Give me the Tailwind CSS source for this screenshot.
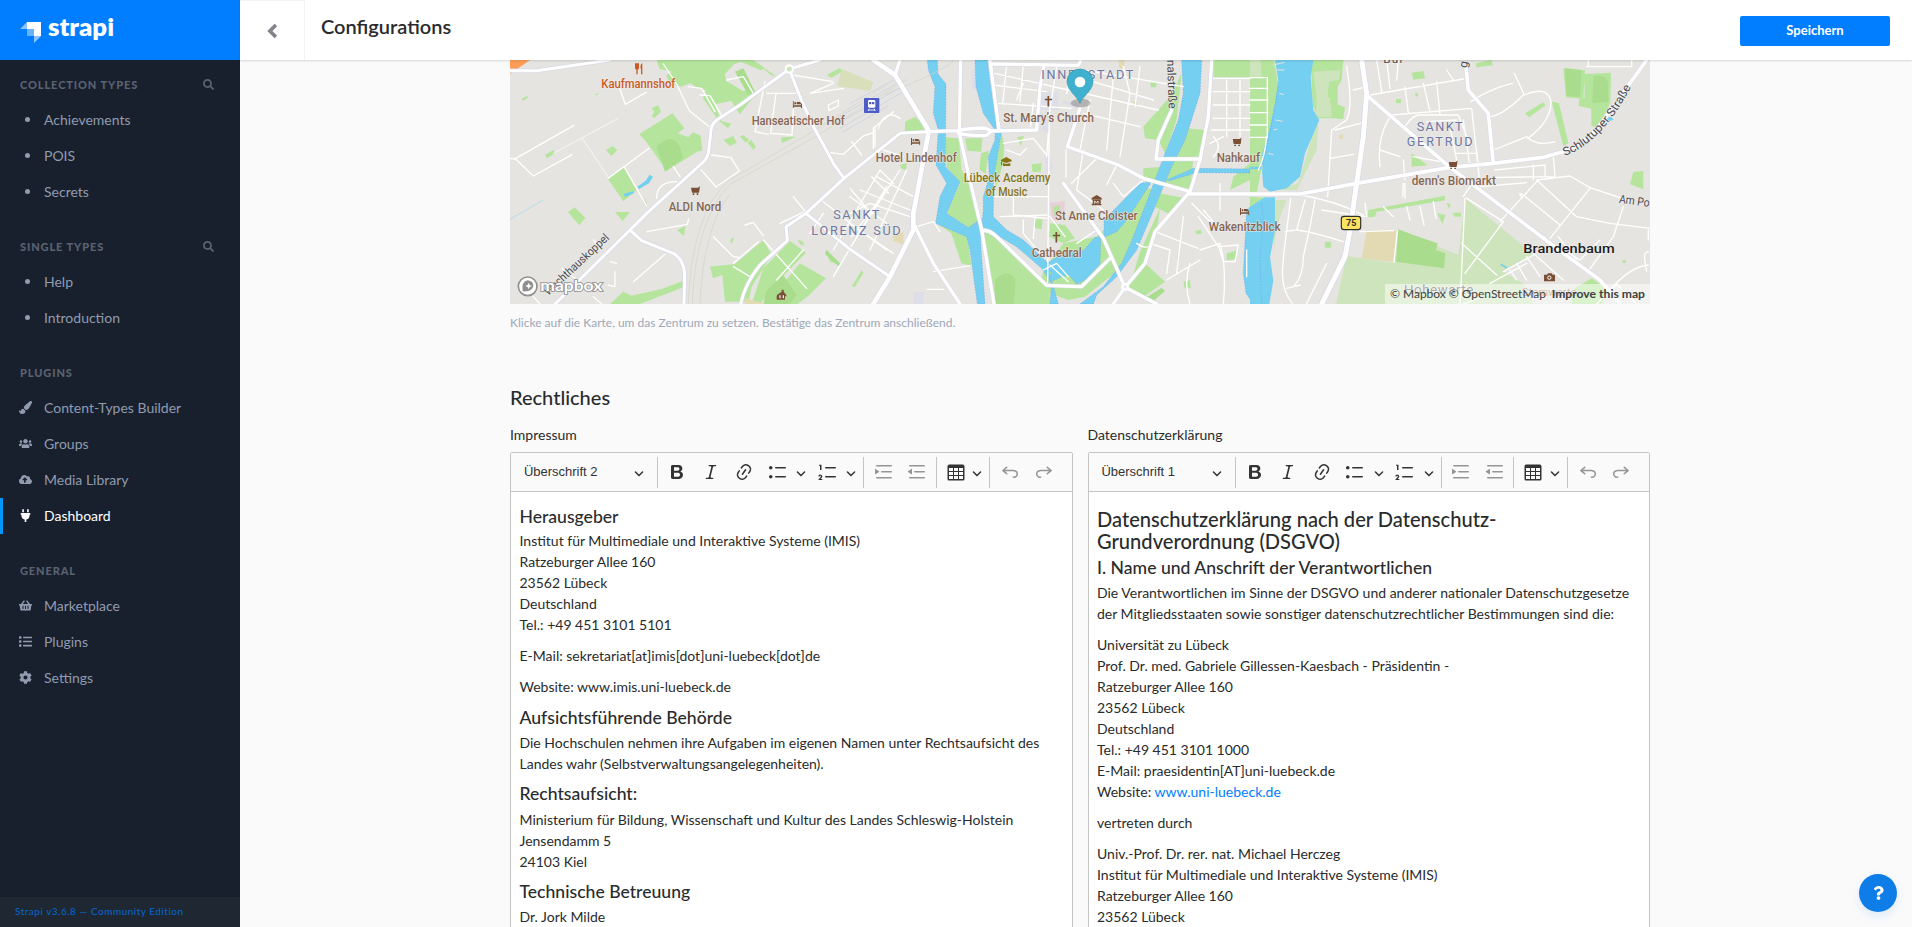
<!DOCTYPE html>
<html lang="de">
<head>
<meta charset="utf-8">
<title>Configurations</title>
<script src="https://cdn.jsdelivr.net/npm/@tailwindcss/browser@4"></script>
</head>
<body class="h-[927px] overflow-hidden bg-[#fafafb] font-[Lato,sans-serif] text-[14px] text-[#292b2c]">

<!-- Icon sprite -->
<svg class="hidden">
  <symbol id="search" viewBox="0 0 512 512"><path d="M505 442.7L405.3 343c-4.5-4.5-10.6-7-17-7H372c27.6-35.3 44-79.7 44-128C416 93.1 322.9 0 208 0S0 93.1 0 208s93.1 208 208 208c48.3 0 92.7-16.4 128-44v16.3c0 6.4 2.5 12.5 7 17l99.7 99.7c9.4 9.4 24.6 9.4 33.9 0l28.3-28.3c9.4-9.4 9.4-24.6.1-34zM208 336c-70.7 0-128-57.2-128-128 0-70.7 57.2-128 128-128 70.7 0 128 57.2 128 128 0 70.7-57.2 128-128 128z"/></symbol>
  <symbol id="brush" viewBox="0 0 512 512"><path d="M167.02 309.34c-40.12 2.58-76.53 17.86-97.19 72.3-2.35 6.21-8 9.98-14.59 9.98-11.11 0-45.46-27.67-55.25-34.35C0 439.62 37.93 512 128 512c75.86 0 128-43.77 128-120.19 0-3.11-.65-6.08-.97-9.13l-88.01-73.34zM457.89 0c-15.16 0-29.37 6.71-40.21 16.45C213.27 199.05 192 203.34 192 257.09c0 13.7 3.25 26.76 8.73 38.7l63.82 53.18c7.21 1.8 14.64 3.03 22.39 3.03 62.11 0 98.11-45.47 211.16-256.46 7.38-14.35 13.9-29.85 13.9-45.99C512 20.64 486 0 457.89 0z"/></symbol>
  <symbol id="users" viewBox="0 0 640 512"><path d="M96 224c35.3 0 64-28.7 64-64s-28.7-64-64-64-64 28.7-64 64 28.7 64 64 64zm448 0c35.3 0 64-28.7 64-64s-28.7-64-64-64-64 28.7-64 64 28.7 64 64 64zm32 32h-64c-17.6 0-33.5 7.1-45.1 18.6 40.3 22.1 68.9 62 75.1 109.4h66c17.7 0 32-14.3 32-32v-32c0-35.3-28.7-64-64-64zm-256 0c61.9 0 112-50.1 112-112S381.9 32 320 32 208 82.1 208 144s50.1 112 112 112zm76.8 32h-8.3c-20.8 10-43.9 16-68.5 16s-47.6-6-68.5-16h-8.3C179.6 288 128 339.6 128 403.2V432c0 26.5 21.5 48 48 48h288c26.5 0 48-21.5 48-48v-28.8c0-63.6-51.6-115.2-115.2-115.2zm-223.7-13.4C161.5 263.1 145.6 256 128 256H64c-35.3 0-64 28.7-64 64v32c0 17.7 14.3 32 32 32h65.9c6.3-47.4 34.9-87.3 75.2-109.4z"/></symbol>
  <symbol id="cloud" viewBox="0 0 640 512"><path d="M537.6 226.6c4.1-10.7 6.4-22.4 6.4-34.6 0-53-43-96-96-96-19.7 0-38.1 6-53.3 16.2C367 64.2 315.3 32 256 32c-88.4 0-160 71.6-160 160 0 2.7.1 5.4.2 8.1C40.2 219.8 0 273.2 0 336c0 79.5 64.5 144 144 144h368c70.7 0 128-57.3 128-128 0-61.9-44-113.6-102.4-125.4zM393.4 288H328v112c0 8.8-7.2 16-16 16h-48c-8.8 0-16-7.2-16-16V288h-65.4c-14.3 0-21.4-17.2-11.3-27.3l105.4-105.4c6.2-6.2 16.4-6.2 22.6 0l105.4 105.4c10.1 10.1 2.9 27.3-11.3 27.3z"/></symbol>
  <symbol id="plug" viewBox="0 0 384 512"><path d="M320 32a32 32 0 0 0-64 0v96h64zm48 128H16a16 16 0 0 0-16 16v32a16 16 0 0 0 16 16h16v32a160.07 160.07 0 0 0 128 156.8V512h64v-99.2A160.07 160.07 0 0 0 352 256v-32h16a16 16 0 0 0 16-16v-32a16 16 0 0 0-16-16zM128 32a32 32 0 0 0-64 0v96h64z"/></symbol>
  <symbol id="basket" viewBox="0 0 576 512"><path d="M576 216v16c0 13.255-10.745 24-24 24h-8l-26.113 182.788C514.509 462.435 494.257 480 470.37 480H105.63c-23.887 0-44.139-17.565-47.518-41.212L32 256h-8c-13.255 0-24-10.745-24-24v-16c0-13.255 10.745-24 24-24h67.341l106.78-146.821c10.395-14.292 30.407-17.453 44.701-7.058 14.293 10.395 17.453 30.408 7.058 44.701L170.477 192h235.046L326.12 82.821c-10.395-14.292-7.234-34.306 7.059-44.701 14.291-10.395 34.306-7.235 44.701 7.058L484.659 192H552c13.255 0 24 10.745 24 24zM312 392V280c0-13.255-10.745-24-24-24s-24 10.745-24 24v112c0 13.255 10.745 24 24 24s24-10.745 24-24zm112 0V280c0-13.255-10.745-24-24-24s-24 10.745-24 24v112c0 13.255 10.745 24 24 24s24-10.745 24-24zm-224 0V280c0-13.255-10.745-24-24-24s-24 10.745-24 24v112c0 13.255 10.745 24 24 24s24-10.745 24-24z"/></symbol>
  <symbol id="list" viewBox="0 0 512 512"><rect y="48" width="96" height="96" rx="16"/><rect y="208" width="96" height="96" rx="16"/><rect y="368" width="96" height="96" rx="16"/><rect x="160" y="64" width="352" height="64" rx="16"/><rect x="160" y="224" width="352" height="64" rx="16"/><rect x="160" y="384" width="352" height="64" rx="16"/></symbol>
  <symbol id="cog" viewBox="0 0 512 512"><path d="M487.4 315.7l-42.6-24.6c4.3-23.2 4.3-47 0-70.2l42.6-24.6c4.9-2.8 7.1-8.6 5.5-14-11.1-35.6-30-67.8-54.7-94.6-3.8-4.1-10-5.1-14.8-2.3L380.8 110c-17.9-15.4-38.5-27.3-60.8-35.1V25.8c0-5.6-3.9-10.5-9.4-11.7-36.7-8.2-74.3-7.8-109.2 0-5.5 1.2-9.4 6.1-9.4 11.7V75c-22.2 7.9-42.8 19.8-60.8 35.1L88.7 85.5c-4.9-2.8-11-1.9-14.8 2.3-24.7 26.7-43.6 58.9-54.7 94.6-1.7 5.4.6 11.2 5.5 14L67.3 221c-4.3 23.2-4.3 47 0 70.2l-42.6 24.6c-4.9 2.8-7.1 8.6-5.5 14 11.1 35.6 30 67.8 54.7 94.6 3.8 4.1 10 5.1 14.8 2.3l42.6-24.6c17.9 15.4 38.5 27.3 60.8 35.1v49.2c0 5.6 3.9 10.5 9.4 11.7 36.7 8.2 74.3 7.8 109.2 0 5.5-1.2 9.4-6.1 9.4-11.7v-49.2c22.2-7.9 42.8-19.8 60.8-35.1l42.6 24.6c4.9 2.8 11 1.9 14.8-2.3 24.7-26.7 43.6-58.9 54.7-94.6 1.5-5.5-.7-11.3-5.6-14.1zM256 336c-44.1 0-80-35.9-80-80s35.9-80 80-80 80 35.9 80 80-35.9 80-80 80z"/></symbol>
  <symbol id="back" viewBox="0 0 11 16"><path d="M8.900 2L2.900 8l6 6" fill="none" stroke="#81848b" stroke-width="3.700"/></symbol>
  <symbol id="question" viewBox="0 0 384 512"><path d="M202.021 0C122.202 0 70.503 32.703 29.914 91.026c-7.363 10.58-5.093 25.086 5.178 32.874l43.138 32.709c10.373 7.865 25.132 6.026 33.253-4.148 25.049-31.381 43.63-49.449 82.757-49.449 30.764 0 68.816 19.799 68.816 49.631 0 22.552-18.617 34.134-48.993 51.164-35.423 19.86-82.299 44.576-82.299 106.405V320c0 13.255 10.745 24 24 24h72.471c13.255 0 24-10.745 24-24v-5.773c0-42.86 125.268-44.645 125.268-160.627C377.504 66.256 286.902 0 202.021 0zM192 373.459c-38.196 0-69.271 31.075-69.271 69.271 0 38.195 31.075 69.27 69.271 69.27s69.271-31.075 69.271-69.271-31.075-69.27-69.271-69.27z"/></symbol>
  <symbol id="bold" viewBox="0 0 20 20"><path d="M10.187 17H5.773c-.637 0-1.092-.138-1.364-.415-.273-.277-.409-.718-.409-1.323V4.738c0-.617.14-1.062.419-1.332.279-.27.73-.406 1.354-.406h4.68c.69 0 1.288.041 1.793.124.506.083.96.242 1.36.478.341.197.644.447.906.75a3.262 3.262 0 0 1 .808 2.162c0 1.401-.722 2.426-2.167 3.075C15.05 10.175 16 11.315 16 13.01a3.756 3.756 0 0 1-2.296 3.504 6.1 6.1 0 0 1-1.517.377c-.571.073-1.238.11-2 .11zm-.217-6.217H7v4.087h3.069c1.977 0 2.965-.69 2.965-2.072 0-.707-.256-1.22-.768-1.537-.512-.319-1.277-.478-2.296-.478zM7 5.13v3.619h2.606c.729 0 1.292-.067 1.69-.2a1.6 1.6 0 0 0 .91-.765c.165-.267.247-.566.247-.897 0-.707-.26-1.176-.778-1.409-.519-.232-1.31-.348-2.375-.348H7z"/></symbol>
  <symbol id="italic" viewBox="0 0 20 20"><path d="m9.586 14.633.021.004c-.036.335.095.655.393.962.082.083.173.15.274.201h1.474a.6.6 0 1 1 0 1.2H5.304a.6.6 0 0 1 0-1.2h1.15c.474-.07.809-.182 1.005-.334.157-.122.291-.32.404-.597l2.416-9.55a1.053 1.053 0 0 0-.281-.823 1.12 1.12 0 0 0-.442-.296H8.15a.6.6 0 0 1 0-1.2h6.443a.6.6 0 1 1 0 1.2h-1.195c-.376.056-.65.155-.823.296-.215.175-.423.439-.623.79l-2.366 9.347z"/></symbol>
  <symbol id="link" viewBox="0 0 20 20"><path d="m11.077 15 .991-1.416a.75.75 0 1 1 1.229.86l-1.148 1.64a.748.748 0 0 1-.217.206 5.251 5.251 0 0 1-8.503-5.955.741.741 0 0 1 .12-.274l1.147-1.639a.75.75 0 1 1 1.228.86L4.933 10.7l.006.003a3.75 3.75 0 0 0 6.132 4.294l.006.004zm5.494-5.335a.748.748 0 0 1-.12.274l-1.147 1.639a.75.75 0 1 1-1.228-.86l.86-1.23a3.75 3.75 0 0 0-6.144-4.301l-.86 1.229a.75.75 0 0 1-1.229-.86l1.148-1.64a.748.748 0 0 1 .217-.206 5.251 5.251 0 0 1 8.503 5.955zm-4.563-2.532a.75.75 0 0 1 .184 1.045l-3.155 4.505a.75.75 0 1 1-1.229-.86l3.155-4.506a.75.75 0 0 1 1.045-.184z"/></symbol>
  <symbol id="bullets" viewBox="0 0 20 20"><path d="M7 5.75c0 .414.336.75.75.75h9.5a.75.75 0 1 0 0-1.5h-9.5a.75.75 0 0 0-.75.75zm-6 0C1 4.784 1.777 4 2.75 4c.966 0 1.75.777 1.75 1.75 0 .966-.777 1.75-1.75 1.75C1.784 7.5 1 6.723 1 5.75zm6 9c0 .414.336.75.75.75h9.5a.75.75 0 1 0 0-1.5h-9.5a.75.75 0 0 0-.75.75zm-6 0c0-.966.777-1.75 1.75-1.75.966 0 1.75.777 1.75 1.75 0 .966-.777 1.75-1.75 1.75-.966 0-1.75-.777-1.75-1.75z"/></symbol>
  <symbol id="numbers" viewBox="0 0 20 20"><path d="M7 5.75c0 .414.336.75.75.75h9.5a.75.75 0 1 0 0-1.5h-9.5a.75.75 0 0 0-.75.75zM3.5 3v5H2V3.7H1v-1h2.5V3zM.343 17.857l2.59-3.257H2.92a.6.6 0 1 0-1.04 0H.302a2 2 0 1 1 3.995 0h-.001c-.048.405-.16.734-.333.988-.175.254-.59.692-1.244 1.312H4.3v1h-4l.043-.043zM7 14.75a.75.75 0 0 1 .75-.75h9.5a.75.75 0 1 1 0 1.5h-9.5a.75.75 0 0 1-.75-.75z"/></symbol>
  <symbol id="indent" viewBox="0 0 20 20"><path d="M2 3.75c0 .414.336.75.75.75h14.5a.75.75 0 1 0 0-1.5H2.75a.75.75 0 0 0-.75.75zm5 6c0 .414.336.75.75.75h9.5a.75.75 0 1 0 0-1.5h-9.5a.75.75 0 0 0-.75.75zM2.75 16.5h14.5a.75.75 0 1 0 0-1.5H2.75a.75.75 0 1 0 0 1.5zM1.632 6.95 5.02 9.358a.4.4 0 0 1-.013.661l-3.39 2.207A.4.4 0 0 1 1 11.892V7.275a.4.4 0 0 1 .632-.326z"/></symbol>
  <symbol id="outdent" viewBox="0 0 20 20"><path d="M2 3.75c0 .414.336.75.75.75h14.5a.75.75 0 1 0 0-1.5H2.75a.75.75 0 0 0-.75.75zm5 6c0 .414.336.75.75.75h9.5a.75.75 0 1 0 0-1.5h-9.5a.75.75 0 0 0-.75.75zM2.75 16.5h14.5a.75.75 0 1 0 0-1.5H2.75a.75.75 0 1 0 0 1.5zm1.618-9.55L.98 9.358a.4.4 0 0 0 .013.661l3.39 2.207A.4.4 0 0 0 5 11.892V7.275a.4.4 0 0 0-.632-.326z"/></symbol>
  <symbol id="table" viewBox="0 0 20 20"><path d="M3 6v3h4V6H3zm0 4v3h4v-3H3zm0 4v3h4v-3H3zm5 3h4v-3H8v3zm5 0h4v-3h-4v3zm4-4v-3h-4v3h4zm0-4V6h-4v3h4zm1.5 8a1.5 1.5 0 0 1-1.5 1.5H3A1.5 1.5 0 0 1 1.5 17V4c.222-.863 1.068-1.5 2-1.5h13c.932 0 1.778.637 2 1.5v13zM12 13v-3H8v3h4zm0-4V6H8v3h4z"/></symbol>
  <symbol id="undo" viewBox="0 0 20 20"><path d="m5.042 9.367 2.189 1.837a.75.75 0 0 1-.965 1.149l-3.788-3.18a.747.747 0 0 1-.21-.284.75.75 0 0 1 .17-.945L6.23 4.762a.75.75 0 1 1 .964 1.15L4.863 7.866h8.917A.75.75 0 0 1 14 7.9a4 4 0 1 1-1.477 7.718l.344-1.489a2.5 2.5 0 1 0 1.094-4.73l.008-.032H5.042z"/></symbol>
  <symbol id="chev" viewBox="0 0 10 10"><path d="M.941 4.523a.75.75 0 1 1 1.06-1.06l3.006 3.005 3.005-3.005a.75.75 0 1 1 1.06 1.06l-3.549 3.55a.75.75 0 0 1-1.168-.136L.941 4.523z"/></symbol>
  <symbol id="bed" viewBox="0 0 28 22"><path d="M0 0h3v13h22V8h3v14h-3v-5H3v5H0zM5 4h5v6H5zM12 3h9l4 3v4H12z" fill="#7a4f35"/></symbol>
  <symbol id="cart" viewBox="0 0 28 26"><path d="M26 0h2l-3 19H4L1 4h22zM6 21h5v5H6zm12 0h5v5h-5z" fill="#7a4f35"/></symbol>
  <symbol id="cross" viewBox="0 0 22 32"><path d="M8.500 0h5v8H22v5h-8.500v19h-5V13H0V8h8.500z" fill="#7a4f35"/></symbol>
</svg>

<div class="flex h-full">
  <!-- Sidebar -->
  <aside class="flex w-[240px] shrink-0 flex-col bg-[#18202e] text-[#919bae]">
    <div class="flex h-[60px] items-start bg-[#007eff] pt-[7px] pl-5">
      <svg class="h-[48px] w-[100px]" viewBox="0 -10 100 48">
        <path d="M7 5h14v14h-7v-7H7z" fill="#fff"/>
        <path d="M7 5v7H0zM14 19h7l-7 7z" fill="#8dc4ff"/>
        <path d="M7 12h7v7H7z" fill="#66b2ff"/>
        <text x="28" y="19" font-family="Lato" font-weight="800" font-size="25" fill="#fff" textLength="66" lengthAdjust="spacingAndGlyphs">strapi</text>
      </svg>
    </div>
    <nav class="flex flex-col pt-[7px]">
      <div class="flex h-[35px] items-center justify-between pt-[2px] pr-[26px] pl-5 text-[11px] font-black tracking-[.9px] text-[#5b6270]">COLLECTION TYPES<svg class="size-[11px] -translate-y-px fill-current"><use href="#search"/></svg></div>
      <div class="mb-[19px]">
        <div class="flex h-9 items-center pb-[2px] pl-[25px]"><i class="mr-[14px] size-[5px] rounded-full bg-current"></i>Achievements</div>
        <div class="flex h-9 items-center pb-[2px] pl-[25px]"><i class="mr-[14px] size-[5px] rounded-full bg-current"></i>POIS</div>
        <div class="flex h-9 items-center pb-[2px] pl-[25px]"><i class="mr-[14px] size-[5px] rounded-full bg-current"></i>Secrets</div>
      </div>
      <div class="flex h-[35px] items-center justify-between pt-[2px] pr-[26px] pl-5 text-[11px] font-black tracking-[.9px] text-[#5b6270]">SINGLE TYPES<svg class="size-[11px] -translate-y-px fill-current"><use href="#search"/></svg></div>
      <div class="mb-[19px]">
        <div class="flex h-9 items-center pb-[2px] pl-[25px]"><i class="mr-[14px] size-[5px] rounded-full bg-current"></i>Help</div>
        <div class="flex h-9 items-center pb-[2px] pl-[25px]"><i class="mr-[14px] size-[5px] rounded-full bg-current"></i>Introduction</div>
      </div>
      <div class="flex h-[35px] items-center pt-[2px] pl-5 text-[11px] font-black tracking-[.9px] text-[#5b6270]">PLUGINS</div>
      <div class="mb-[19px]">
        <div class="flex h-9 items-center gap-3 pb-[2px] pl-[19px]"><svg class="size-[13px] fill-current"><use href="#brush"/></svg>Content-Types Builder</div>
        <div class="flex h-9 items-center gap-3 pb-[2px] pl-[19px]"><svg class="size-[13px] fill-current"><use href="#users"/></svg>Groups</div>
        <div class="flex h-9 items-center gap-3 pb-[2px] pl-[19px]"><svg class="size-[13px] fill-current"><use href="#cloud"/></svg>Media Library</div>
        <div class="flex h-9 items-center gap-3 border-l-[3px] border-[#0097f7] pb-[2px] pl-4 text-white"><svg class="size-[13px] fill-current"><use href="#plug"/></svg>Dashboard</div>
      </div>
      <div class="flex h-[35px] items-center pt-[2px] pl-5 text-[11px] font-black tracking-[.9px] text-[#5b6270]">GENERAL</div>
      <div>
        <div class="flex h-9 items-center gap-3 pb-[2px] pl-[19px]"><svg class="size-[13px] fill-current"><use href="#basket"/></svg>Marketplace</div>
        <div class="flex h-9 items-center gap-3 pb-[2px] pl-[19px]"><svg class="size-[13px] fill-current"><use href="#list"/></svg>Plugins</div>
        <div class="flex h-9 items-center gap-3 pb-[2px] pl-[19px]"><svg class="size-[13px] fill-current"><use href="#cog"/></svg>Settings</div>
      </div>
    </nav>
    <div class="mt-auto flex h-[30px] items-center bg-[#1f2733] pb-[2px] pl-[15px] text-[10px] tracking-[.5px] text-[#0468d2]">Strapi v3.6.8 — Community Edition</div>
  </aside>

  <div class="flex min-w-0 flex-1 flex-col">
    <header class="z-10 flex h-[60px] shrink-0 bg-white shadow-[0_1px_2px_0_rgba(40,42,49,.16)]">
      <div class="flex w-[65px] items-center justify-center border-t border-r border-[#f3f3f4] pt-[1px]"><svg class="h-[16px] w-[11px]"><use href="#back"/></svg></div>
      <h1 class="pt-[11px] pl-4 text-[20px] leading-[30px] font-semibold">Configurations</h1>
      <button class="mt-4 mr-[22px] ml-auto h-[30px] w-[150px] rounded-[2px] bg-[#007eff] text-[13px] font-bold text-white">Speichern</button>
    </header>

    <main class="flex min-h-0 flex-1 flex-col pl-[270px]">
      <!-- Map of Lübeck -->
      <svg class="h-[244px] w-[1140px] shrink-0" viewBox="30 30 3420 732" font-family="Roboto" font-weight="500">
        <rect x="30" y="30" width="3420" height="732" fill="#e5e4e0"/>
        <!-- parks and fields -->
        <g fill="#b5e59c">
          <path d="M470 30h290l70 50-18-5-20-18-10 4-60-26-20 8-28 30 5 20 50 30 15-5 20 20-45 55-25-40-50 10 20 50 30 8-10 14-30-25-45-65 8-25-25-5-20-15-30 10-35-15-8-20 18-10-38-8z"/>
          <path d="M418 252l100-62 35 45-20 15 70 25-3 25-100 62-60-85zM545 280l35-33 22 10 5 45-60 10z"/>
          <path d="M455 175l20-10 8 20-20 20-8-8 8-10zM64 148l16-10 5 4-16 10zM282 134l18-6-10 8zM135 315l25-15 5 10-25 15zM318 300l20-12 14 12-18 18zM322 385l52-34 36 70-40 33zM204 486l20-14 32 32-18 22zM345 486h45l-22 27zM531 540l25-12-4 30zM670 270l30-12 10 20-20 10zM720 260l10-5 18 15-10 8zM743 278l10-8 15 20-8 10zM843 262l45-2-42 20zM980 75l40-22 5 12-30 18z"/>
          <path d="M630 650l75-8 85-72 25 45-60 95-10 45h-70l-8-80-28 10zM790 655l80-82 48 35-78 80-60 74h-25zM850 700l50-60 78 45-50 50-35 27h-80zM975 600l45 45-30-10zM1055 710l30-50 5 10-25 40zM330 762l40-37 25 12 90-20 65-25v20l-130 50zM893 570l12 2 10 15-15-5zM690 570l12-10-6 22zM432 440l10 25-5 2z"/>
        </g>
        <g fill="#a9dd8d"><path d="M470 290q60-60 80 35l-55 40zM705 65l25-10 35 70-20 10zM800 720l50-45 40 60-20 27h-80zM980 600l40 40-5 8-40-36z"/></g>
        <path d="M1025 57l95 40-10 25-98-14z" fill="#d8dfba"/>
        <path d="M735 743l60 19h-60zM1175 570l35 15v-30z" fill="#e3dab4"/>
        <path d="M30 30h60L30 72z" fill="#ff9c57"/>
        <path d="M412 410l25-18 12-18 10 6-12 20-30 17zM370 432l28-8 5 5-28 12z" fill="#75cff0"/><path d="M30 508l100-58" stroke="#9fd6f0" stroke-width="2"/>
        <g transform="translate(1050 0)">
          <g fill="#b5e59c">
            <path d="M165 215l30-15 35 32 2 13h-67zM286 262l40 3 9 95 20 40 30 120-28 15-67-45 40-90-40-50zM345 265h52l-3 40-42-3zM388 358l5-48 24-8-10 70zM455 250l7 30-2 60-24 80 2-90zM257 518l95 40 12 90-30-8-30-90z"/>
            <path d="M395 540l45 18 150 140 15 64H440zM545 343l30-4-3 28-25-2zM555 508h22l-2 30-20-4zM600 520l45 5 30 40-35 15-42-20zM502 262l20-4-10 30zM150 345l20-6-2 22-15-6z"/>
            <path d="M880 230l80-90 35-70-15 140-35 100-20-40-40-5zM1010 235l52 5-12 80-90 5 40-80zM880 355l57-5-12 45-45-12zM930 430l75 15-45 48-45-22zM640 580l100-20 60-60 80-90 35 10-60 170-50 70-100 80-50 10-85-30 10-60zM885 640l60 55-70 50-45-30zM870 605l60-130-10 70-35 95-40 50z"/>
            <path d="M955 330h75l-10 90-85-25zM1090 30h110v52H1090zM1035 543l18-4 2 12-15 2zM1130 610l28-8v24l-28 5zM1000 695l20-5 2 25h-18zM900 100l20-4-2 16h-15zM1150 380l50-40v50l-60 30z"/>
          </g>
          <path d="M435 690q40-40 62 0l-5 72h-57zM885 745l50-32 10 10-35 30z" fill="#a9dd8d"/>
          <path d="M600 458l45-5-4 55-35 5z" fill="#e6cfd6"/><path d="M610 470l20-5-2 30-15 2z" fill="#b5e59c"/>
          <path d="M575 125h50v55h-50zM585 315l15 5 10 35-22 10zM635 153l50 5-5 15-45-12zM190 728l32-2-3 36h-28zM365 60l18 2-5 60-12-5zM570 190l35 10-12 50-20-10z" fill="#dbdce8" opacity=".8"/>
          <path d="M805 30h20l-5 25h-12zM848 155l12-2-2 18-10-4zM125 560l35-15v35z" fill="#e3dab4"/>
          <g fill="#75cff0" stroke="#6aa0ec" stroke-width="1.500" stroke-dasharray="5 4">
            <path d="M232 30h30l2 42 24 30-2 248 44 45-40 95 65 43 40-28-3 75 13 182h-23l-22-162-10-40-93-40 13-80 20-40-32-55 7-105-15-50 5-80-20-50z"/>
            <path d="M375 30h37l6 50 22 155 14 15-14 80-10 70v100l40 40 50 30 70 65 15 55 20 72h-25l5-62-30-45-75-65-60-35-45-25 5-50v-40l18-60-3-60 20-50v-30l-35-50-22-80z"/>
            <path d="M588 642l52-32 60-8 35-40 17-2-2 82-45 48-25 12-25-28-22 8-38 15 10-25zM762 510l108-110 35-5-75 115-30 35-38 17z"/>
            <path d="M995 30h60l-5 100-45 140-40 80-50 120-55 130-60 80-60 55-10 27h-40l70-52 55-70 35-80 50-130 45-120 40-100 15-80zM950 390l80-35 170 2v12l-160-1-80 24z"/>
            <path d="M1190 480l12-10v280l-14-20-8-60z"/>
          </g>
        </g>
        <g transform="translate(2250 0)">
          <path d="M0 30h72l14 80-11 70-15 70-25 100-15 80H0zM182 30h98l-5 60-12 20v95h-58l-17-40zM260 162l25 10-5 35h-20zM940 55l65 6-5 85-52-4zM1003 72l80-4-2 90-35 75-22-5v-52l-38-8 2-22 16-2zM905 155l22 5 28 120-15 8zM825 190l55-33 7 9-50 36zM355 480l230-43v14L380 485l-5 15-22 2zM485 310l48 36-48 4zM485 68l35-5 5 22-35 4zM678 40l45-10 6 16-50 6zM438 148l15-2v14h-15zM495 130l8-2 2 10-8 2zM562 490l25 5-10 27zM608 488h25v12h-20zM590 460l12 2-5 15zM1150 365l30-2v55l-40-15zM0 440l60 5-60 30zM1118 630h10v9h-10zM225 575h18v18h-18z" fill="#b5e59c"/>
          <path d="M0 30h32l3 50H0zM190 65l80-5-3 30-30 5-5 55-32-3zM200 140l40 2 6 60-48-2zM70 620q5-100 40-170H75zM145 400l55-190 5 20-5 70-60 120h-60z" fill="#cde4bc"/>
          <path d="M290 618l140 20 15-98 180 75 20-170 205 167-90 53 60 35 30 62H258z" fill="#cde4bc"/>
          <path d="M445 538l60 22 58 20-5 20 28 10-4 45-144-20zM945 55l50 5-5 80-40-3zM1030 80q45-15 45 30v45l-48 5z" fill="#a9dd8d"/>
          <path d="M350 540l92 3-10 93-97-11zM267 254h12v12h-12z" fill="#e3dab4"/>
          <path d="M965 720l60-35 50 35-20 42h-90z" fill="#b5e59c"/>
          <g fill="#75cff0" stroke="#6aa0ec" stroke-width="1.500" stroke-dasharray="5 4">
            <path d="M75 30h115l-8 50 8 100 18 30-43 100-15 70-40 35-50 10-20-15-5-60H0v8h38l-3-40 25-88 15-70 10-70z" stroke="none"/>
            <path d="M0 470l45-28h30v100l-15 80 10 70-12 70H0z" stroke="none"/>
            <path d="M752 640l20 12-2 4-18-10zM1065 205l20-5 5 10-20 5z" stroke="none"/>
            <path d="M85 110L60 250 36 350M35 460l5 60-10 100 5 142" fill="none"/>
            <path d="M70 45l34-8M80 60h24M76 210l22 4M70 240l12-3M55 310l16 4M88 130l14 4" stroke="#e5e4e0" stroke-width="3" stroke-dasharray="none"/>
          </g>
        </g>
        <!-- railways -->
        <g fill="none" stroke="#d3d3c6" stroke-width="2"><path d="M565 762q10-270 120-370l250-145 220-140M577 762q10-260 115-360l260-145 270-170M600 762q10-230 90-330"/><path d="M1150 135q200-80 210-105"/></g>
        <g fill="none" stroke="#cdd0e4" stroke-width="2.500"><path d="M1010 205l190-110M1015 220l190-110M1020 235l190-110M1025 248l140-80M1050 160l150-80"/></g>
        <!-- minor streets -->
        <g fill="none" stroke="#fff" stroke-width="4" stroke-linejoin="round" stroke-linecap="round">
          <path d="M222 226L46 326l54 52 116-64M30 325l16 2M325 385l122-90M372 350l68 118M352 95l24 68 62-36M490 42l40 60 38 80 60 48M565 110l40 5 40 70M600 135l30 2 35 60M680 90l50-10 30 50M800 130h90M828 130l-16 120 64 5 4-80M795 95l-30 150 40 8M635 315l58 8 25 40-70 48-45-52M470 445q0-50 60-50M440 545l122-22 4-16M400 695l95-82M640 560l60 60 15 2M700 640l75-65M700 650l50 30M790 570l130 145M910 600l-80 90M840 520l95-45M735 525l25-8 30 40M985 165l30-15v18l-28 14zM878 75l120 20M1000 100l-70 30 100-15M990 308l40 5 60-55 30-10M1055 275l30 40M1120 295v-60l60-50" /><path d="M1050 440l110 80M970 455l100 80 110 75M1000 600l140-240 40 40M1050 415l55 65M1115 380l50 50M880 440l40 50M1055 560l120-160M1000 680l160-270M970 490l-40 60M100 740l20 22M350 640l-20-5M345 665v45l-20-5M280 740l25 22M185 655l40 30M300 595l-20-25M520 350l20 30"/>
          <path d="M355 205L160 310M247 265l80 120" stroke-width="2"/>
        </g>
        <g transform="translate(1050 0)" fill="none" stroke="#fff" stroke-width="4" stroke-linejoin="round" stroke-linecap="round">
          <path d="M435 70l220 50 270 60M430 105l160 20M445 160l220 15M470 42l-12 120M520 45l-10 110M550 160l-8 70M620 50l-22 140-5 510M660 60l-10 70M700 60l300 50M730 95l180 55M700 190l170 40M820 50l20 80-30 190M870 50l-15 120M790 80l-20 220M720 150l-30 150M595 250l-5 70M648 300v80M700 300l-20 120 80 60M745 320l-80 80M800 345l-30 60M880 390l-60 50-30-40M460 280l90-15 40 50M470 300l40 15 20-20M435 440h160M490 440v55l100 10M450 500l140-5M520 510v40l50 60M555 500l-5 65M600 500l45 60M680 580l60-40M520 100L500 150"/>
          <path d="M85 235q20-60 65-30M75 290v-60M100 300l60 20M250 665l110-18M232 718h50M200 530l50-15 20 30M0 490l60-30 120 40M30 420l150 60M20 560l130-200M60 600l110-240M0 520l110 80M80 380l110 60"/>
          <path d="M1090 85h110M1090 125h110M1090 165h110M1090 205h110M1085 240h115M1080 280l40-20M1130 90v170M1170 90v170M1090 260q30 30 0 60M1110 400v80M1025 460l60 60M915 545l130 50M900 580l60 20-10 70M1000 500l-20 170M950 690l100-60M1020 640q-20 60 0 122M1050 600l60-20M1110 580q20 70 10 182M1045 500l60 90 60-5-10 50h-35l-15-50M1190 600v80M860 580q30 20 40 5M1060 480l50 60"/>
          <path d="M600 645l55 50M580 660l40-20 35 40"/>
        </g>
        <g transform="translate(2250 0)" fill="none" stroke="#fff" stroke-width="4" stroke-linejoin="round" stroke-linecap="round">
          <path d="M0 83h52v180M0 115h54M0 150h54M0 188h54M0 225h52M0 262h50M50 260q-5 60-25 100"/>
          <path d="M290 50q20 120 0 160l-45 30-12 200M255 240l95-25M310 120l40-10M240 325l70-12M380 30l15 95M410 30l10 85M445 30l-5 60M360 135l280-48M425 195l240-20M465 110l10 80M520 100l20 85M560 95l10 100M590 60l20 30M425 195q-45 60-35 155M390 300l60 20M460 240q20-40 45-45h120l35 90M530 215l90-5M460 400l-2 40M600 230l20 100M640 210l20 140M490 320l110 20M460 330l5 60M465 400v45M680 300l10 110 140-12M665 175l25 230M620 310h60"/>
          <path d="M662 155q60-40 125-55M793 70l30 65q70-30 80 20 0 60-70 110M730 300l100-40q30 30 85 15M720 200q40-5 100-65M735 360l150-15v35M735 382l180-2-5-60M850 345v45M860 390l120 110 100 20 120 15M860 390l100-12 60 35 120 40M1020 415l-120 150M860 395l-110 120M815 440q-15-15 5-5l110 90M1120 470l-30 90-80 110M890 570l100 60 60-60M925 560l70 90M850 610l90 80M850 615l-90 50M800 640l30 50M830 620l40 60M780 660l20 30M720 700l110-60M645 445l-15 320M640 440l20-30M650 445l110 70-115 155M635 580l105 95M400 470l30 30M470 470l10 40M510 470l12 55M550 455l8 50M345 460l5 40M330 545l100-3M442 543l-10 93"/>
          <path d="M122 445l-20 160-5 60q0 60 30 95M165 450l-25 90q40 5 90 20M195 450l-15 80-20 90q0 60-30 90M105 545l30-5M215 480l130 20M110 715l40-10M150 435q100 15 190 60M230 560l50 15M170 760l60-120M1010 50h135V30M1015 30v20M1195 540v30M1195 605q-15 0-10 30l5 30"/>
          <path d="M1080 720q60-70 115-75M1040 762l60-60 60 60M640 762l80-30"/>
        </g>
        <!-- major roads: casing then fill -->
        <defs>
          <g id="mA"><path d="M30 62h80L330 30M960 30l-92 27-148 108-70 45q-18 15-18 40l-7 60q-5 20-25 35L440 490l-50 50L165 762M868 57l32 83 35 80 65 120 32 45M390 540l35 32 95 38q32 20 34 60l-2 92M918 490l132 108 120 82"/><path d="M1286 245l-86 5-168 135-114 105-60 40 4 42-82 73q-45 55-58 117"/></g>
          <g id="mB"><path d="M190 520l60 120 80 122M135 75l15-45M235 245l90-3q30-8 80-8l20 9 135-3 10-130 12-65M325 250q45 9 85 6l15-13M332 30l-4 220 27 120 40 170 37 222M420 30l27 210M428 42l257 4 8-16M395 540q25 0 45 20l150 146 105 4 85-85M640 400l120 165 65 147-35 50M825 712l95 50M825 712l60-72 30-95 105-120 30-95 25-130 10-170M690 175l-38 115 153 55 75 40 140 40M1020 432h180M965 180l-40 90-7 57h127"/></g>
          <g id="mBw"><path d="M235 250l-45 240v50l-70 140-50 82M70 30l65 45 100 165"/></g>
          <g id="mC"><path d="M355 140l245 212 340 258 110 80 60 72M648 50l7 70 60 70 15 150M0 432h150l170-32 280-48 130-12 150-18 60-17q70-25 110-80L1190 30"/></g>
          <g id="mCw"><path d="M335 30l15 100-10 130-40 280-15 80-70 142"/></g>
        </defs>
        <g fill="none" stroke="#d6d7e8" stroke-linejoin="round" stroke-linecap="round">
          <use href="#mA" stroke-width="13"/><g transform="translate(1050 0)"><use href="#mB" stroke-width="13"/><use href="#mBw" stroke-width="18"/></g><g transform="translate(2250 0)"><use href="#mC" stroke-width="14"/><use href="#mCw" stroke-width="19"/></g>
        </g>
        <g fill="none" stroke="#fff" stroke-linejoin="round" stroke-linecap="round">
          <use href="#mA" stroke-width="9"/><g transform="translate(1050 0)"><use href="#mB" stroke-width="10"/><use href="#mBw" stroke-width="14"/></g><g transform="translate(2250 0)"><use href="#mC" stroke-width="11"/><use href="#mCw" stroke-width="15"/></g>
        </g>
        <circle cx="868" cy="57" r="11" fill="#cde4bc" stroke="#fff" stroke-width="7"/>
        <circle cx="1875" cy="711" r="8" fill="#e5e4e0" stroke="#fff" stroke-width="8"/>
        <!-- labels -->
        <g font-size="36" stroke="#f0efec" stroke-width="3" paint-order="stroke" stroke-linejoin="round" fill="#856655">
          <text x="304" y="115" fill="#cb5a26" textLength="222" lengthAdjust="spacingAndGlyphs">Kaufmannshof</text>
          <text x="755" y="224" textLength="279" lengthAdjust="spacingAndGlyphs">Hanseatischer Hof</text>
          <text x="506" y="482" textLength="158" lengthAdjust="spacingAndGlyphs">ALDI Nord</text>
          <text x="1127" y="335" textLength="243" lengthAdjust="spacingAndGlyphs">Hotel Lindenhof</text>
          <text x="1510" y="216" textLength="272" lengthAdjust="spacingAndGlyphs">St. Mary’s Church</text>
          <text x="1665" y="510" textLength="248" lengthAdjust="spacingAndGlyphs">St Anne Cloister</text>
          <text x="1595" y="622" textLength="150" lengthAdjust="spacingAndGlyphs">Cathedral</text>
          <text x="2150" y="335" textLength="130" lengthAdjust="spacingAndGlyphs">Nahkauf</text>
          <text x="2126" y="544" textLength="216" lengthAdjust="spacingAndGlyphs">Wakenitzblick</text>
          <text x="2735" y="404" textLength="253" lengthAdjust="spacingAndGlyphs">denn's Biomarkt</text>
          <g fill="#857420"><text x="1391" y="395" textLength="260" lengthAdjust="spacingAndGlyphs">Lübeck Academy</text><text x="1457" y="438" textLength="125" lengthAdjust="spacingAndGlyphs">of Music</text></g>
          <g fill="#6d76a3" font-weight="400" font-size="38"><text x="1000" y="508" textLength="138">SANKT</text><text x="934" y="554" textLength="268">LORENZ SÜD</text><text x="1624" y="86" textLength="276">INNENSTADT</text><text x="2750" y="243" textLength="138">SANKT</text><text x="2720" y="289" textLength="198">GERTRUD</text></g>
          <g fill="#4a4a50" font-weight="400" font-size="35">
            <text transform="translate(145 738) rotate(-43)" textLength="252" lengthAdjust="spacingAndGlyphs">Wachthauskoppel</text>
            <text transform="translate(2001 30) rotate(88)" textLength="146" lengthAdjust="spacingAndGlyphs">nalstraße</text>
            <path id="schl" d="M3194 318Q3310 275 3400 98" fill="none" stroke="none"/>
            <text><textPath href="#schl" textLength="294" lengthAdjust="spacingAndGlyphs">Schlutuper Straße</textPath></text>
            <text transform="translate(3356 458) rotate(8)" textLength="92" lengthAdjust="spacingAndGlyphs">Am Po</text>
            <text x="2650" y="38" textLength="60">Bur</text><text transform="translate(2900 55) rotate(-80)">g</text>
            <text x="2712" y="732" fill="#55534e" font-size="40" textLength="208">Hohewarte</text>
            <text x="3065" y="738" fill="#a37a63" textLength="165">Sternwarte</text>
          </g>
          <text x="3070" y="608" font-size="40" fill="#1c1c1e" textLength="274" lengthAdjust="spacingAndGlyphs">Brandenbaum</text>
        </g>
        <!-- points of interest -->
        <path d="M405 40v14q0 4 4 5v14h4V59q4-1 4-5V40zM423 73V58q-5-12 4-19v34z" fill="#cb5a26"/>
        <use href="#bed" x="878" y="153" width="28" height="22"/><use href="#bed" x="1233" y="264" width="28" height="22"/><use href="#bed" x="2220" y="474" width="28" height="22"/>
        <use href="#cart" x="572" y="409" width="28" height="26"/><use href="#cart" x="2197" y="263" width="28" height="26"/><use href="#cart" x="2845" y="332" width="28" height="26"/>
        <use href="#cross" x="1634" y="138" width="22" height="32"/><use href="#cross" x="1658" y="546" width="22" height="32"/>
        <path d="M1503 330l16-9 16 9v4l-16 5-16-5zM1509 339l10 3 12-3v9h-22zM1503 336h3v10h-3z" fill="#8a7516"/>
        <path d="M1775 444l15-9 15 9v5h-30zM1778 450h24v12h-24zM1775 462h29v4h-29z" fill="#7a4f35"/><path d="M1784 461v-8l5 5 5-5v8" stroke="#fff" stroke-width="2.500" fill="none"/>
        <path d="M831 735l14-10v-6h6v6l8 10v4h-4v10h-25v-10z" fill="#7a4f35"/><path d="M838 736h4v9h-4zM848 736h4v9h-4z" fill="#e5e4e0"/>
        <path d="M3132 674h9l3-4h11l3 4h7v20h-33z" fill="#7a4f35"/><circle cx="3148" cy="683" r="5" stroke="#fff" stroke-width="3" fill="none"/>
        <rect x="1092" y="144" width="46" height="45" rx="2" fill="#4c5cc9"/><rect x="1104" y="150" width="22" height="23" rx="4" fill="#fff"/><path d="M1107 156h7v7h-7zM1116 156h7v7h-7z" fill="#4c5cc9"/><path d="M1108 176l-4 7M1122 176l4 7M1105 180h20" stroke="#fff" stroke-width="2.500"/>
        <rect x="2524" y="499" width="58" height="40" rx="8" fill="#fbe25f" stroke="#30302a" stroke-width="3.500"/><text x="2538" y="529" font-size="27" font-weight="700" fill="#30302a">75</text>
        <!-- marker -->
        <ellipse cx="1742" cy="159" rx="30" ry="13" fill="#555" opacity=".35"/>
        <path d="M1740 160c-8-22-39-38-39-66a39 37 0 0 1 78 0c0 28-31 44-39 66z" fill="#3fb1ce" stroke="#3597b0" stroke-width="2"/><circle cx="1740" cy="96" r="16" fill="#fff"/>
        <!-- attribution and logo -->
        <rect x="2655" y="702" width="795" height="60" fill="#fff" opacity=".5"/>
        <g font-family="Lato" font-size="36" fill="#404040"><text x="2670" y="743" font-weight="400" textLength="468" lengthAdjust="spacingAndGlyphs">© Mapbox © OpenStreetMap</text><text x="3155" y="743" font-weight="700" textLength="280" lengthAdjust="spacingAndGlyphs">Improve this map</text></g>
        <circle cx="83" cy="709" r="28" fill="#fff" stroke="#8f8f8f" stroke-width="5"/><path d="M68 724q-4-30 15-33 18 2 17 18-4 18-32 15z" fill="#8f8f8f"/><path d="M86 698l3 7 7 3-7 3-3 7-3-7-7-3 7-3z" fill="#fff"/>
        <text x="121" y="722" font-family="Lato" font-size="46" font-weight="700" fill="#fff" stroke="#8f8f8f" stroke-width="5" paint-order="stroke" textLength="186" lengthAdjust="spacingAndGlyphs">mapbox</text>
      </svg>
      <p class="mt-[10px] text-[12px] leading-[18px] text-[#9ea7b8]">Klicke auf die Karte, um das Zentrum zu setzen. Bestätige das Zentrum anschließend.</p>

      <h2 class="mt-[50px] text-[20px] leading-[30px] font-medium">Rechtliches</h2>

      <div class="mt-[12px] grid w-[1140px] grid-cols-2 gap-[15px]">
        <section>
          <p class="mb-[7px] leading-[21px]">Impressum</p>
          <div class="h-[480px] rounded-t-[2px] border border-[#c4c4c4] bg-white">
            <div class="flex h-[39px] items-center border-b border-[#c4c4c4] bg-[#fafafa] fill-[#333]">
              <div class="flex w-[146px] items-center justify-between px-[13px]"><span class="font-['Liberation_Sans'] text-[12px] tracking-[.03px] text-[#333]"><span class="text-[13px] tracking-[-.02px]">Überschrift 2</span></span><svg class="mt-[2px] size-[10px]"><use href="#chev"/></svg></div>
              <i class="h-[31px] w-px bg-[#c4c4c4]"></i>
              <div class="ml-[2.5px] flex w-[33.5px] justify-center"><svg class="size-5"><use href="#bold"/></svg></div>
              <div class="flex w-[33.5px] justify-center"><svg class="size-5"><use href="#italic"/></svg></div>
              <div class="flex w-[33.5px] justify-center"><svg class="size-5"><use href="#link"/></svg></div>
              <div class="flex w-[33.5px] justify-center"><svg class="size-5"><use href="#bullets"/></svg></div>
              <svg class="mt-[2px] ml-[1.5px] size-[10px]"><use href="#chev"/></svg>
              <div class="ml-[5px] flex w-[33.5px] justify-center"><svg class="size-5"><use href="#numbers"/></svg></div>
              <svg class="mt-[2px] ml-[1.8px] size-[10px]"><use href="#chev"/></svg>
              <i class="ml-[7px] h-[31px] w-px bg-[#c4c4c4]"></i>
              <div class="ml-[2.7px] flex w-[33.5px] justify-center opacity-50"><svg class="size-5"><use href="#indent"/></svg></div>
              <div class="flex w-[33.5px] justify-center opacity-50"><svg class="size-5"><use href="#outdent"/></svg></div>
              <i class="ml-[2px] h-[31px] w-px bg-[#c4c4c4]"></i>
              <div class="ml-[2px] flex w-[33.5px] justify-center"><svg class="size-5"><use href="#table"/></svg></div>
              <svg class="mt-[2px] size-[10px]"><use href="#chev"/></svg>
              <i class="ml-[7px] h-[31px] w-px bg-[#c4c4c4]"></i>
              <div class="ml-[3px] flex w-[33.5px] justify-center opacity-50"><svg class="size-5"><use href="#undo"/></svg></div>
              <div class="flex w-[33.5px] justify-center opacity-50"><svg class="size-5 -scale-x-100"><use href="#undo"/></svg></div>
            </div>
            <div class="px-[8.500px] pt-[15px] leading-[21px]">
              <h3 class="mb-[3.2px] text-[17.6px] leading-[19.8px] font-medium">Herausgeber</h3>
              <p class="mb-[10px]">Institut für Multimediale und Interaktive Systeme (IMIS)<br>Ratzeburger Allee 160<br>23562 Lübeck<br>Deutschland<br>Tel.: +49 451 3101 5101</p>
              <p class="mb-[10px]">E-Mail: sekretariat[at]imis[dot]uni-luebeck[dot]de</p>
              <p class="mb-[10.6px]">Website: www.imis.uni-luebeck.de</p>
              <h3 class="mb-[4.4px] text-[17.6px] leading-[19.8px] font-medium">Aufsichtsführende Behörde</h3>
              <p class="mb-[10.6px]">Die Hochschulen nehmen ihre Aufgaben im eigenen Namen unter Rechtsaufsicht des<br>Landes wahr (Selbstverwaltungsangelegenheiten).</p>
              <h3 class="mb-[4.4px] text-[17.6px] leading-[19.8px] font-medium">Rechtsaufsicht:</h3>
              <p class="mb-[10.6px]">Ministerium für Bildung, Wissenschaft und Kultur des Landes Schleswig-Holstein<br>Jensendamm 5<br>24103 Kiel</p>
              <h3 class="mb-[4.4px] text-[17.6px] leading-[19.8px] font-medium">Technische Betreuung</h3>
              <p>Dr. Jork Milde</p>
            </div>
          </div>
        </section>

        <section>
          <p class="mb-[7px] leading-[21px]">Datenschutzerklärung</p>
          <div class="h-[480px] rounded-t-[2px] border border-[#c4c4c4] bg-white">
            <div class="flex h-[39px] items-center border-b border-[#c4c4c4] bg-[#fafafa] fill-[#333]">
              <div class="flex w-[146px] items-center justify-between px-[13px]"><span class="font-['Liberation_Sans'] text-[12px] tracking-[.03px] text-[#333]"><span class="text-[13px] tracking-[-.02px]">Überschrift 1</span></span><svg class="mt-[2px] size-[10px]"><use href="#chev"/></svg></div>
              <i class="h-[31px] w-px bg-[#c4c4c4]"></i>
              <div class="ml-[2.5px] flex w-[33.5px] justify-center"><svg class="size-5"><use href="#bold"/></svg></div>
              <div class="flex w-[33.5px] justify-center"><svg class="size-5"><use href="#italic"/></svg></div>
              <div class="flex w-[33.5px] justify-center"><svg class="size-5"><use href="#link"/></svg></div>
              <div class="flex w-[33.5px] justify-center"><svg class="size-5"><use href="#bullets"/></svg></div>
              <svg class="mt-[2px] ml-[1.5px] size-[10px]"><use href="#chev"/></svg>
              <div class="ml-[5px] flex w-[33.5px] justify-center"><svg class="size-5"><use href="#numbers"/></svg></div>
              <svg class="mt-[2px] ml-[1.8px] size-[10px]"><use href="#chev"/></svg>
              <i class="ml-[7px] h-[31px] w-px bg-[#c4c4c4]"></i>
              <div class="ml-[2.7px] flex w-[33.5px] justify-center opacity-50"><svg class="size-5"><use href="#indent"/></svg></div>
              <div class="flex w-[33.5px] justify-center opacity-50"><svg class="size-5"><use href="#outdent"/></svg></div>
              <i class="ml-[2px] h-[31px] w-px bg-[#c4c4c4]"></i>
              <div class="ml-[2px] flex w-[33.5px] justify-center"><svg class="size-5"><use href="#table"/></svg></div>
              <svg class="mt-[2px] size-[10px]"><use href="#chev"/></svg>
              <i class="ml-[7px] h-[31px] w-px bg-[#c4c4c4]"></i>
              <div class="ml-[3px] flex w-[33.5px] justify-center opacity-50"><svg class="size-5"><use href="#undo"/></svg></div>
              <div class="flex w-[33.5px] justify-center opacity-50"><svg class="size-5 -scale-x-100"><use href="#undo"/></svg></div>
            </div>
            <div class="px-[8.500px] pt-[16px] leading-[21px]">
              <h2 class="mb-[6px] text-[20.1px] leading-[22px] font-medium">Datenschutzerklärung nach der Datenschutz-<br>Grundverordnung (DSGVO)</h2>
              <h3 class="mb-[4px] text-[17.6px] leading-[19.8px] font-medium">I. Name und Anschrift der Verantwortlichen</h3>
              <p class="mb-[10px]">Die Verantwortlichen im Sinne der DSGVO und anderer nationaler Datenschutzgesetze<br>der Mitgliedsstaaten sowie sonstiger datenschutzrechtlicher Bestimmungen sind die:</p>
              <p class="mb-[10px]">Universität zu Lübeck<br>Prof. Dr. med. Gabriele Gillessen-Kaesbach - Präsidentin -<br>Ratzeburger Allee 160<br>23562 Lübeck<br>Deutschland<br>Tel.: +49 451 3101 1000<br>E-Mail: praesidentin[AT]uni-luebeck.de<br>Website: <a class="text-[#007eff]">www.uni-luebeck.de</a></p>
              <p class="mb-[10px]">vertreten durch</p>
              <p>Univ.-Prof. Dr. rer. nat. Michael Herczeg<br>Institut für Multimediale und Interaktive Systeme (IMIS)<br>Ratzeburger Allee 160<br>23562 Lübeck</p>
            </div>
          </div>
        </section>
      </div>
    </main>
  </div>
</div>

<!-- Help button -->
<button class="fixed right-[15px] bottom-[15px] z-20 flex size-[38px] items-center justify-center rounded-full bg-[#0e7de7] shadow-[0_4px_10px_rgba(14,125,231,.12)]"><svg class="h-[14px] w-[11px] fill-white"><use href="#question"/></svg></button>
</body>
</html>
